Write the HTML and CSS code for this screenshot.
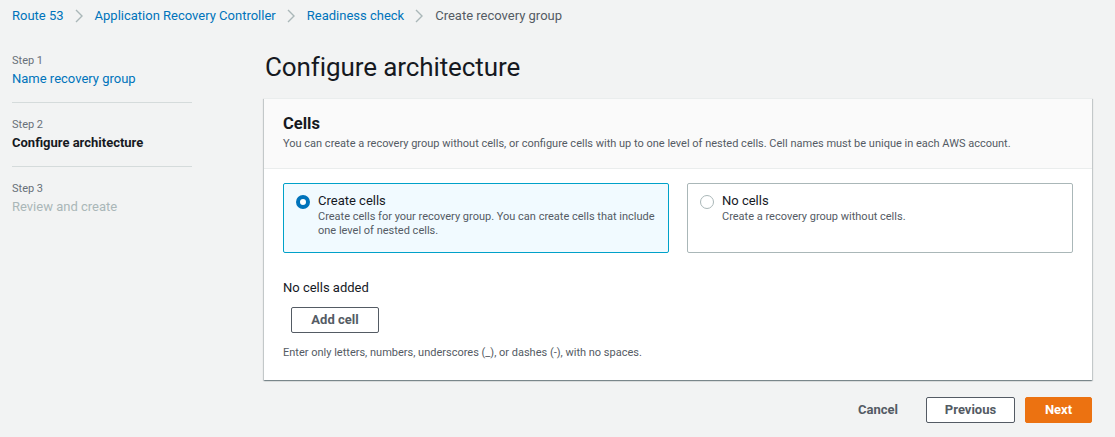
FILE: index.html
```html
<!DOCTYPE html>
<html>
<head>
<meta charset="utf-8">
<link rel="stylesheet" href="styles.css">
</head>
<body>
<nav class="crumbs">
  <a class="crumb-link">Route 53</a>
  <svg class="chev" viewBox="0 0 16 16"><path d="M5 2l6 6-6 6" fill="none" stroke="currentColor" stroke-width="1.4"/></svg>
  <a class="crumb-link">Application Recovery Controller</a>
  <svg class="chev" viewBox="0 0 16 16"><path d="M5 2l6 6-6 6" fill="none" stroke="currentColor" stroke-width="1.4"/></svg>
  <a class="crumb-link">Readiness check</a>
  <svg class="chev" viewBox="0 0 16 16"><path d="M5 2l6 6-6 6" fill="none" stroke="currentColor" stroke-width="1.4"/></svg>
  <span class="crumb-current">Create recovery group</span>
</nav>
<div class="layout">
  <ul class="steps">
    <li class="step">
      <div class="step-num">Step 1</div>
      <a class="step-title link">Name recovery group</a>
    </li>
    <li class="step">
      <div class="step-num">Step 2</div>
      <span class="step-title current">Configure architecture</span>
    </li>
    <li class="step">
      <div class="step-num">Step 3</div>
      <span class="step-title disabled">Review and create</span>
    </li>
  </ul>
  <main class="content">
    <h1 class="page-title">Configure architecture</h1>
    <section class="container">
      <header class="container-header">
        <h2 class="container-title">Cells</h2>
        <p class="container-desc">You can create a recovery group without cells, or configure cells with up to one level of nested cells. Cell names must be unique in each AWS account.</p>
      </header>
      <div class="container-body">
        <div class="tiles">
          <label class="tile selected">
            <span class="radio checked"></span>
            <span class="tile-text">
              <span class="tile-label">Create cells</span>
              <span class="tile-desc">Create cells for your recovery group. You can create cells that include one level of nested cells.</span>
            </span>
          </label>
          <label class="tile">
            <span class="radio"></span>
            <span class="tile-text">
              <span class="tile-label">No cells</span>
              <span class="tile-desc">Create a recovery group without cells.</span>
            </span>
          </label>
        </div>
        <div class="empty">No cells added</div>
        <button class="btn btn-normal add-btn">Add cell</button>
        <p class="hint">Enter only letters, numbers, underscores (_), or dashes (-), with no spaces.</p>
      </div>
    </section>
    <div class="actions">
      <button class="btn btn-link">Cancel</button>
      <button class="btn btn-normal prev-btn">Previous</button>
      <button class="btn btn-primary">Next</button>
    </div>
  </main>
</div>
</body>
</html>
```

FILE: styles.css
```css
* { box-sizing: border-box; }
html, body { margin: 0; padding: 0; }
body {
  background: #f2f3f3;
  font-family: Roboto, "Liberation Sans", Arial, sans-serif;
  color: #16191f;
  font-size: 13px;
  line-height: 18px;
  width: 1115px;
  height: 437px;
  overflow: hidden;
}
.crumbs {
  display: flex;
  align-items: center;
  height: 20px;
  margin: 6px 0 0 12px;
  font-size: 13px;
}
.crumb-link { color: #0073bb; }
.crumb-current { color: #545b64; }
.chev {
  width: 16px;
  height: 16px;
  color: #aab7b8;
  margin: 0 8px 0 7px;
  flex: none;
}
.layout {
  display: flex;
  margin-top: 13px;
}
.steps {
  list-style: none;
  margin: 0 0 0 12px;
  padding: 0;
  width: 180px;
  flex: none;
}
.step {
  padding: 14px 0 14px;
  border-bottom: 1px solid #d5dbdb;
}
.step:last-child { border-bottom: none; }
.step-num {
  font-size: 11px;
  line-height: 16px;
  color: #687078;
}
.step-title { display: block; font-size: 13px; line-height: 18px; margin-top: 1px; }
.step-title.link { color: #0073bb; }
.step-title.current { font-weight: 700; color: #16191f; }
.step-title.disabled { color: #aab7b8; }
.content {
  margin-left: 72px;
  padding-top: 12px;
  width: 828px;
  flex: none;
}
.page-title {
  margin: 0;
  font-size: 26px;
  font-weight: 400;
  line-height: 32px;
  padding: 0 0 15px 1px;
  letter-spacing: -0.1px;
  color: #16191f;
}
.container {
  background: #fff;
  box-shadow: 0 1px 1px 0 rgba(0,28,36,.3), 1px 1px 1px 0 rgba(0,28,36,.15), -1px 1px 1px 0 rgba(0,28,36,.15);
  border-top: 1px solid #eaeded;
}
.container-header {
  background: #fafafa;
  border-bottom: 1px solid #eaeded;
  padding: 15px 19px 16px;
}
.container-title {
  margin: 0;
  font-size: 16.5px;
  line-height: 20px;
  font-weight: 700;
}
.container-desc {
  margin: 2px 0 0;
  font-size: 11px;
  line-height: 16px;
  color: #545b64;
}
.container-body {
  padding: 14px 19px 19px;
}
.tiles {
  display: flex;
  gap: 18px;
}
.tile {
  flex: 1;
  height: 70px;
  border: 1px solid #aab7b8;
  border-radius: 2px;
  display: flex;
  align-items: flex-start;
  padding: 8px 12px;
}
.tile.selected {
  background: #f1faff;
  border-color: #00a1c9;
}
.radio {
  width: 14px;
  height: 14px;
  border-radius: 50%;
  border: 1px solid #aab7b8;
  background: #fff;
  margin-top: 3px;
  flex: none;
}
.radio.checked {
  border: 4px solid #0073bb;
}
.tile-text {
  display: flex;
  flex-direction: column;
  margin-left: 8px;
}
.tile-label { font-size: 13px; line-height: 18px; color: #16191f; }
.tile-desc {
  font-size: 11px;
  line-height: 14px;
  color: #545b64;
  max-width: 345px;
}
.empty {
  margin-top: 26px;
  font-size: 13px;
  line-height: 18px;
}
.btn {
  font-family: inherit;
  font-size: 13px;
  font-weight: 700;
  line-height: 18px;
  height: 26px;
  padding: 3px 18px;
  border-radius: 2px;
  cursor: pointer;
}
.btn-normal {
  background: #fff;
  border: 1px solid #545b64;
  color: #545b64;
  padding: 3px 0;
}
.add-btn {
  display: block;
  margin: 10px 0 0 8px;
  width: 88px;
}
.hint {
  margin: 12px 0 0;
  font-size: 11px;
  line-height: 16px;
  color: #545b64;
}
.actions {
  display: flex;
  justify-content: flex-end;
  align-items: center;
  gap: 10px;
  margin-top: 17px;
}
.btn-link {
  background: none;
  border: none;
  color: #545b64;
}
.prev-btn { width: 89px; }
.btn-primary {
  background: #ec7211;
  border: 1px solid #ec7211;
  color: #fff;
  width: 67px;
  padding: 3px 0;
}
```
